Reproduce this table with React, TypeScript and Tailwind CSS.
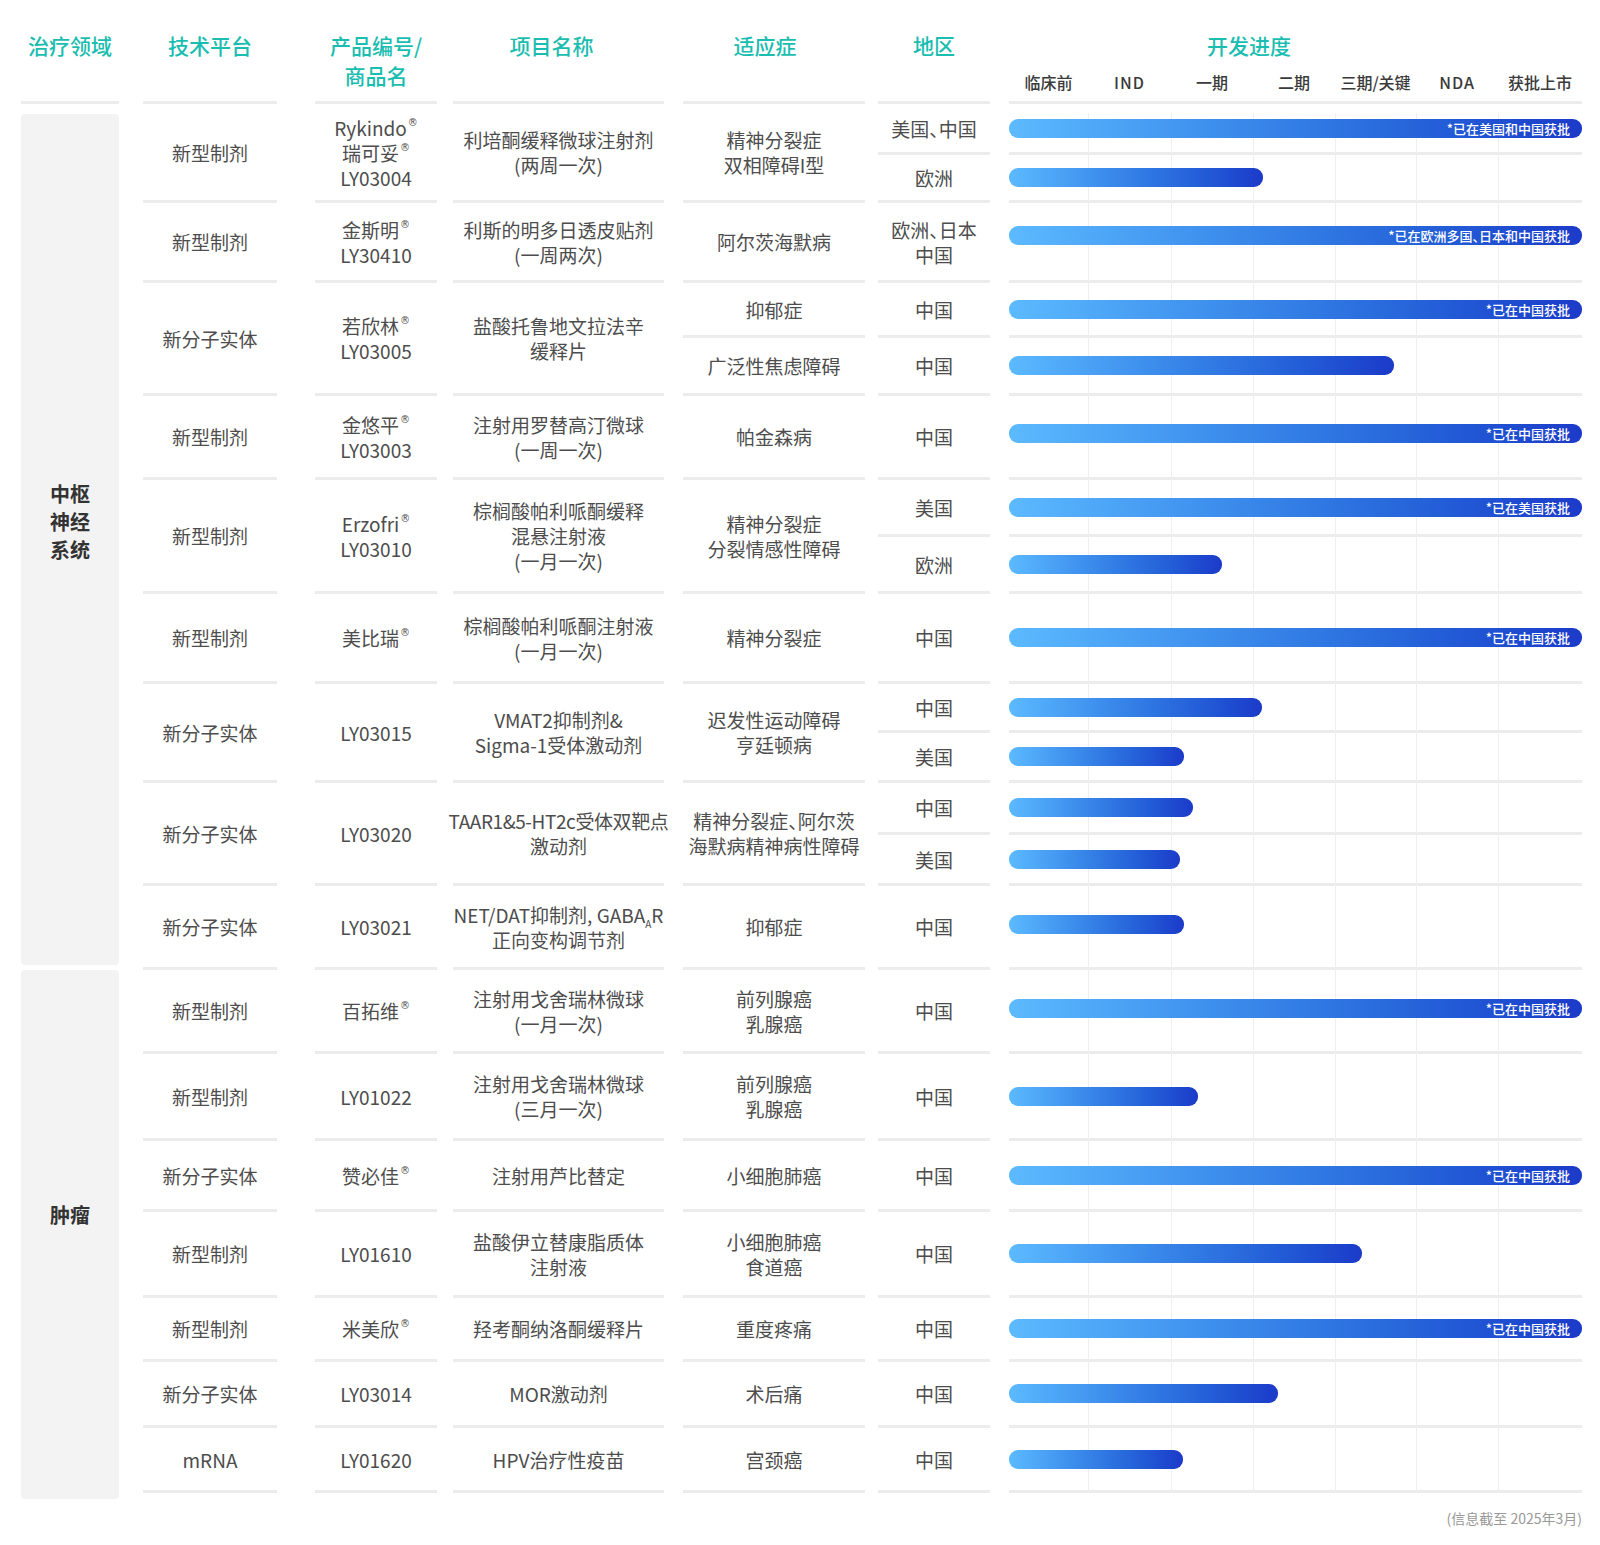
import React from "react";

type Sub = {
  h: string;
  region: string[];
  w?: number;
  note?: string;
  ind?: string[];
  shift?: string;
};

type Row = {
  h: string;
  tech: string;
  code: React.ReactNode[];
  name: React.ReactNode[];
  ind?: string[];
  subs: Sub[];
};

const FULL = 573;

const stages = [
  { label: "临床前", w: "w-[79px]" },
  { label: "IND", w: "w-[83px] tracking-[0.06em]" },
  { label: "一期", w: "w-[82px]" },
  { label: "二期", w: "w-[82px]" },
  { label: "三期/关键", w: "w-[81px]" },
  { label: "NDA", w: "w-[82px] tracking-[0.06em]" },
  { label: "获批上市", w: "w-[84px]" },
];

const gridLines = [
  "left-[1088px]",
  "left-[1171px]",
  "left-[1253px]",
  "left-[1335px]",
  "left-[1416px]",
  "left-[1498px]",
];

// ® raised and small, 、 set half width like the original
function Txt({ text }: { text: string }) {
  const parts = text.split(/(®|、)/);
  return (
    <>
      {parts.map((p, i) => {
        if (p === "®")
          return (
            <span
              key={i}
              className="relative top-[3px] ml-[1px] align-top font-['DejaVu_Sans',sans-serif] text-[10px] leading-none"
            >
              ®
            </span>
          );
        if (p === "、")
          return (
            <span key={i} className="[font-feature-settings:'halt']">
              、
            </span>
          );
        return <React.Fragment key={i}>{p}</React.Fragment>;
      })}
    </>
  );
}

const gaba = (
  <>
    NET/DAT抑制剂, GABA
    <span className="relative top-[5px] text-[10px] leading-none">A</span>R
  </>
);

const taar = <span className="tracking-[-0.4px]">TAAR1&5-HT2c受体双靶点</span>;

const cnsRows: Row[] = [
  {
    h: "h-[99px]",
    tech: "新型制剂",
    code: ["Rykindo®", "瑞可妥®", "LY03004"],
    name: ["利培酮缓释微球注射剂", "(两周一次)"],
    ind: ["精神分裂症", "双相障碍I型"],
    subs: [
      { h: "h-[51px]", region: ["美国、中国"], w: FULL, note: "*已在美国和中国获批" },
      { h: "flex-1", region: ["欧洲"], w: 254 },
    ],
  },
  {
    h: "h-[80px]",
    tech: "新型制剂",
    code: ["金斯明®", "LY30410"],
    name: ["利斯的明多日透皮贴剂", "(一周两次)"],
    ind: ["阿尔茨海默病"],
    subs: [
      {
        h: "flex-1",
        region: ["欧洲、日本", "中国"],
        w: 576,
        note: "*已在欧洲多国、日本和中国获批",
        shift: "-translate-y-[6px]",
      },
    ],
  },
  {
    h: "h-[113px]",
    tech: "新分子实体",
    code: ["若欣林®", "LY03005"],
    name: ["盐酸托鲁地文拉法辛", "缓释片"],
    subs: [
      { h: "h-[55px]", region: ["中国"], ind: ["抑郁症"], w: FULL, note: "*已在中国获批" },
      { h: "flex-1", region: ["中国"], ind: ["广泛性焦虑障碍"], w: 385 },
    ],
  },
  {
    h: "h-[84px]",
    tech: "新型制剂",
    code: ["金悠平®", "LY03003"],
    name: ["注射用罗替高汀微球", "(一周一次)"],
    ind: ["帕金森病"],
    subs: [
      { h: "flex-1", region: ["中国"], w: FULL, note: "*已在中国获批", shift: "-translate-y-[3px]" },
    ],
  },
  {
    h: "h-[114px]",
    tech: "新型制剂",
    code: ["Erzofri®", "LY03010"],
    name: ["棕榈酸帕利哌酮缓释", "混悬注射液", "(一月一次)"],
    ind: ["精神分裂症", "分裂情感性障碍"],
    subs: [
      { h: "h-[57px]", region: ["美国"], w: FULL, note: "*已在美国获批" },
      { h: "flex-1", region: ["欧洲"], w: 213 },
    ],
  },
  {
    h: "h-[90px]",
    tech: "新型制剂",
    code: ["美比瑞®"],
    name: ["棕榈酸帕利哌酮注射液", "(一月一次)"],
    ind: ["精神分裂症"],
    subs: [{ h: "flex-1", region: ["中国"], w: FULL, note: "*已在中国获批" }],
  },
  {
    h: "h-[99px]",
    tech: "新分子实体",
    code: ["LY03015"],
    name: ["VMAT2抑制剂&", "Sigma-1受体激动剂"],
    ind: ["迟发性运动障碍", "亨廷顿病"],
    subs: [
      { h: "h-[49px]", region: ["中国"], w: 253 },
      { h: "flex-1", region: ["美国"], w: 175 },
    ],
  },
  {
    h: "h-[103px]",
    tech: "新分子实体",
    code: ["LY03020"],
    name: [taar, "激动剂"],
    ind: ["精神分裂症、阿尔茨", "海默病精神病性障碍"],
    subs: [
      { h: "h-[52px]", region: ["中国"], w: 184 },
      { h: "flex-1", region: ["美国"], w: 171 },
    ],
  },
  {
    h: "h-[84px]",
    tech: "新分子实体",
    code: ["LY03021"],
    name: [gaba, "正向变构调节剂"],
    ind: ["抑郁症"],
    subs: [{ h: "flex-1", region: ["中国"], w: 175, shift: "-translate-y-[2px]" }],
  },
];

const oncoRows: Row[] = [
  {
    h: "h-[84px]",
    tech: "新型制剂",
    code: ["百拓维®"],
    name: ["注射用戈舍瑞林微球", "(一月一次)"],
    ind: ["前列腺癌", "乳腺癌"],
    subs: [{ h: "flex-1", region: ["中国"], w: FULL, note: "*已在中国获批", shift: "-translate-y-[2px]" }],
  },
  {
    h: "h-[87px]",
    tech: "新型制剂",
    code: ["LY01022"],
    name: ["注射用戈舍瑞林微球", "(三月一次)"],
    ind: ["前列腺癌", "乳腺癌"],
    subs: [{ h: "flex-1", region: ["中国"], w: 189 }],
  },
  {
    h: "h-[71px]",
    tech: "新分子实体",
    code: ["赞必佳®"],
    name: ["注射用芦比替定"],
    ind: ["小细胞肺癌"],
    subs: [{ h: "flex-1", region: ["中国"], w: FULL, note: "*已在中国获批" }],
  },
  {
    h: "h-[86px]",
    tech: "新型制剂",
    code: ["LY01610"],
    name: ["盐酸伊立替康脂质体", "注射液"],
    ind: ["小细胞肺癌", "食道癌"],
    subs: [{ h: "flex-1", region: ["中国"], w: 353 }],
  },
  {
    h: "h-[64px]",
    tech: "新型制剂",
    code: ["米美欣®"],
    name: ["羟考酮纳洛酮缓释片"],
    ind: ["重度疼痛"],
    subs: [{ h: "flex-1", region: ["中国"], w: FULL, note: "*已在中国获批" }],
  },
  {
    h: "h-[66px]",
    tech: "新分子实体",
    code: ["LY03014"],
    name: ["MOR激动剂"],
    ind: ["术后痛"],
    subs: [{ h: "flex-1", region: ["中国"], w: 269 }],
  },
  {
    h: "h-[65px]",
    tech: "mRNA",
    code: ["LY01620"],
    name: ["HPV治疗性疫苗"],
    ind: ["宫颈癌"],
    subs: [{ h: "flex-1", region: ["中国"], w: 174 }],
  },
];

const line = "border-b-[3px] border-[#ececec]";

function Lines({ items }: { items: React.ReactNode[] }) {
  return (
    <div className="text-center whitespace-nowrap">
      {items.map((t, i) => (
        <div key={i}>{typeof t === "string" ? <Txt text={t} /> : t}</div>
      ))}
    </div>
  );
}

function Bar({ sub }: { sub: Sub }) {
  return (
    <div
      className={`relative flex h-[19px] items-center justify-end rounded-[9px] bg-linear-to-r from-[#5cbaff] to-[#1c3ac9] pr-[12px] text-[13px] leading-[19px] font-medium text-white ${sub.shift ?? ""}`}
      style={{ width: sub.w }}
    >
      {sub.note ? <Txt text={sub.note} /> : null}
    </div>
  );
}

function TableRow({ row }: { row: Row }) {
  const splitInd = !row.ind;
  return (
    <div className={`flex ${row.h}`}>
      <div className={`ml-[24px] flex w-[134px] items-center justify-center ${line}`}>
        {row.tech}
      </div>
      <div className={`ml-[38px] flex w-[122px] items-center justify-center ${line}`}>
        <Lines items={row.code} />
      </div>
      <div className={`ml-[16px] flex w-[211px] items-center justify-center ${line}`}>
        <Lines items={row.name} />
      </div>
      {splitInd ? (
        <div className="ml-[19px] flex w-[182px] flex-col">
          {row.subs.map((s, i) => (
            <div key={i} className={`flex items-center justify-center ${s.h} ${line}`}>
              <Lines items={s.ind ?? []} />
            </div>
          ))}
        </div>
      ) : (
        <div className={`ml-[19px] flex w-[182px] items-center justify-center ${line}`}>
          <Lines items={row.ind ?? []} />
        </div>
      )}
      <div className="ml-[13px] flex w-[112px] flex-col">
        {row.subs.map((s, i) => (
          <div key={i} className={`flex items-center justify-center ${s.h} ${line}`}>
            <Lines items={s.region} />
          </div>
        ))}
      </div>
      <div className="ml-[19px] flex w-[573px] flex-col">
        {row.subs.map((s, i) => (
          <div key={i} className={`flex items-center ${s.h} ${line}`}>
            {s.w ? <Bar sub={s} /> : null}
          </div>
        ))}
      </div>
    </div>
  );
}

export default function App() {
  return (
    <div className="min-h-[1545px] w-[1600px] bg-white font-['Noto_Sans_CJK_SC','Noto_Sans',sans-serif] text-[19px] leading-[25px] text-[#4d4d4d]">
      {/* header */}
      <div className="flex h-[104px] pl-[21px] text-[21px] leading-[30px] font-medium text-[#1abdb0]">
        <div className={`w-[98px] pt-[30px] text-center ${line}`}>治疗领域</div>
        <div className={`ml-[24px] w-[134px] pt-[30px] text-center ${line}`}>技术平台</div>
        <div className={`ml-[38px] w-[122px] pt-[30px] text-center ${line}`}>
          产品编号/
          <br />
          商品名
        </div>
        <div className={`ml-[16px] w-[211px] pt-[30px] pr-[14px] text-center ${line}`}>项目名称</div>
        <div className={`ml-[19px] w-[182px] pt-[30px] pr-[18px] text-center ${line}`}>适应症</div>
        <div className={`ml-[13px] w-[112px] pt-[30px] text-center ${line}`}>地区</div>
        <div className={`ml-[19px] w-[573px] pt-[30px] ${line}`}>
          <div className="pl-[198px]">开发进度</div>
          <div className="mt-[12px] flex text-[16px] leading-[20px] text-[#3a3a3a]">
            {stages.map((s) => (
              <div key={s.label} className={`${s.w} text-center`}>
                {s.label}
              </div>
            ))}
          </div>
        </div>
      </div>

      {/* body */}
      <div className="relative">
        {gridLines.map((l) => (
          <div key={l} className={`absolute top-[9px] bottom-[7px] w-px bg-[#efefef] ${l}`} />
        ))}

        <div className="flex items-start pl-[21px]">
          <div className="mt-[10px] flex h-[851px] w-[98px] items-center justify-center rounded-[4px] bg-[#f3f3f3] pb-[36px] text-center text-[20px] leading-[28px] font-bold text-[#333]">
            <div>
              中枢
              <br />
              神经
              <br />
              系统
            </div>
          </div>
          <div className="flex flex-col">
            {cnsRows.map((r, i) => (
              <TableRow key={i} row={r} />
            ))}
          </div>
        </div>

        <div className="flex items-start pl-[21px]">
          <div className="flex h-[529px] w-[98px] items-center justify-center rounded-[4px] bg-[#f3f3f3] pb-[40px] text-[20px] leading-[28px] font-bold text-[#333]">
            肿瘤
          </div>
          <div className="flex flex-col">
            {oncoRows.map((r, i) => (
              <TableRow key={i} row={r} />
            ))}
          </div>
        </div>
      </div>

      <div className="mt-[10px] pr-[18px] text-right text-[14px] leading-[18px] text-[#999]">
        (信息截至 2025年3月)
      </div>
    </div>
  );
}
